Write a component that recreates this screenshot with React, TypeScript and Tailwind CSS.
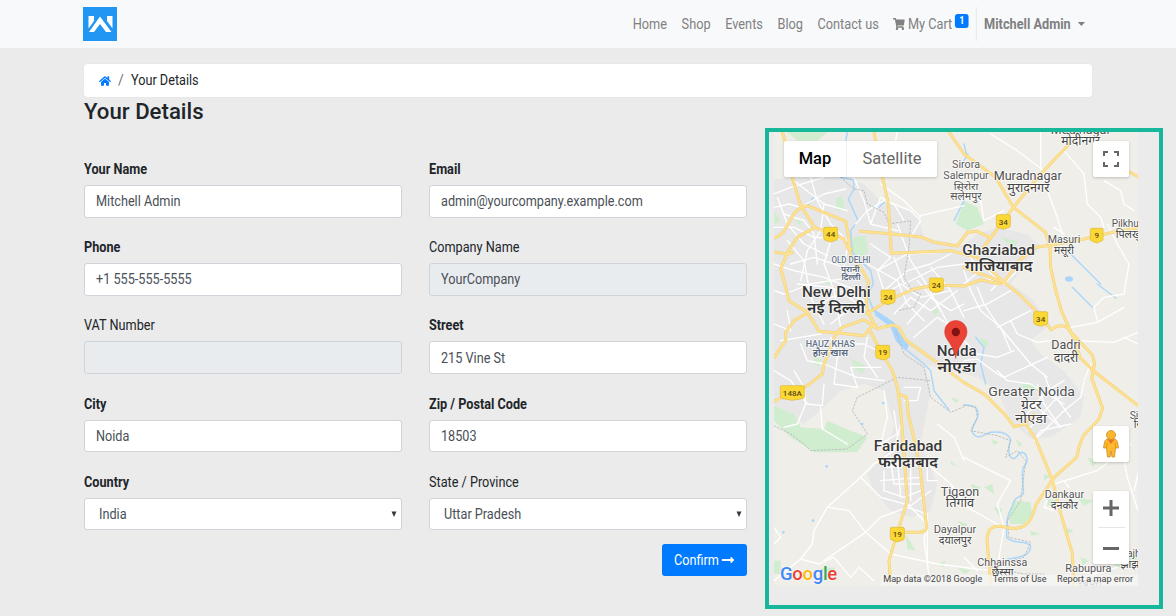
import React from "react";
import { FaHome, FaShoppingCart, FaLongArrowAltRight } from "react-icons/fa";

const NAV = ["Home", "Shop", "Events", "Blog", "Contact us"];

type FieldDef = { label: string; value: string; required?: boolean; kind?: "select" | "disabled" };

const FIELDS: FieldDef[] = [
  { label: "Your Name", value: "Mitchell Admin", required: true },
  { label: "Email", value: "admin@yourcompany.example.com", required: true },
  { label: "Phone", value: "+1 555-555-5555", required: true },
  { label: "Company Name", value: "YourCompany", kind: "disabled" },
  { label: "VAT Number", value: "", kind: "disabled" },
  { label: "Street", value: "215 Vine St", required: true },
  { label: "City", value: "Noida", required: true },
  { label: "Zip / Postal Code", value: "18503", required: true },
  { label: "Country", value: "India", required: true, kind: "select" },
  { label: "State / Province", value: "Uttar Pradesh", kind: "select" },
];

function Field({ label, value, required, kind }: FieldDef) {
  const bg = kind === "disabled" ? "bg-[#e9ecef]" : "bg-white";
  const pad = kind === "select" ? "pl-[14px] pr-1" : "px-[11px]";
  return (
    <div className="h-[78.2px]">
      <div className={`h-[21px] origin-left scale-x-[0.905] leading-[21px] text-[#212529] ${required ? "font-bold" : ""}`}>{label}</div>
      <div className={`mt-[5px] flex h-[32.5px] items-center justify-between rounded-[3px] border border-[#ced4da] text-[#495057] ${bg} ${pad}`}>
        <span className="origin-left scale-x-[0.905] pt-px">{value}</span>
        {kind === "select" && (
          <svg width="6" height="7" viewBox="0 0 6 7"><path d="M0.500 0.500H5.500L3 6Z" fill="#343a40" /></svg>
        )}
      </div>
    </div>
  );
}

const URBAN = [
  "M30 165L225 158L300 180L350 230L460 270L480 340L600 365L640 330L700 310L790 330L830 370L790 410L740 480L800 520L860 600L800 650L830 690L900 740L960 820L950 880L860 940L800 945L740 890L700 800L640 760L560 740L480 720L500 800L470 960L520 1080L500 1160L440 1180L380 1160L330 1100L310 1050L370 980L390 900L360 800L300 780L230 800L180 850L120 900L30 850Z",
];

const GREENS = [
  "M70 24L190 24L160 50L100 50Z", "M30 262L50 290L30 300Z", "M90 290L115 285L110 305Z", "M215 225L235 215L240 255L220 262Z",
  "M268 340L305 335L312 385L290 400L262 380Z", "M180 470L205 462L200 482L185 480Z", "M150 700L175 705L165 728L150 720Z",
  "M262 705L305 725L295 750L268 730Z", "M30 845L90 870L110 910L180 915L190 890L260 920L310 940L280 985L150 985L80 940L30 890Z",
  "M500 560L525 556L515 575Z", "M560 820L585 828L575 838Z", "M600 230L640 250L660 300L610 320L575 300Z", "M710 340L760 350L750 378Z",
  "M650 640L675 655L665 670L650 658Z", "M780 775L820 785L840 800L800 800L770 790Z", "M750 1130L800 1135L805 1170L780 1200L740 1200L730 1170Z",
  "M425 1230L455 1280L430 1275Z", "M680 945L705 955L690 962Z", "M755 945L775 960L765 970Z", "M560 1010L580 1030L560 1020Z",
  "M620 1080L650 1090L630 1110Z", "M660 1090L685 1080L690 1110Z", "M850 1125L885 1130L870 1150L845 1140Z", "M940 1120L990 1130L960 1145Z",
  "M900 1210L930 1220L910 1230Z", "M970 1000L1000 1010L985 1030Z", "M30 1310L50 1310L50 1350L30 1350Z", "M160 1335L215 1330L205 1350Z",
  "M580 1190L610 1200L600 1215Z", "M1040 1310L1120 1290L1120 1320L1060 1330Z", "M520 1320L545 1310L540 1330Z", "M800 1220L830 1230L800 1235Z",
  "M840 1050L860 1055L840 1070Z", "M950 1300L975 1310L955 1325Z", "M690 1150L715 1155L705 1175Z", "M580 1330L620 1340L600 1350Z",
];

const MINOR = [
  "M30 210L80 190L180 160", "M30 250L75 240L110 250L180 210L245 195", "M90 170L180 240L250 260", "M140 160L160 230L200 300L250 350",
  "M40 220L70 300L120 360L190 395", "M30 310L90 310L150 340L240 345", "M60 270L120 290L150 330L160 420", "M180 240L170 320L130 380L110 470",
  "M30 420L90 440L180 460L280 500", "M70 350L120 410L140 520L180 600", "M200 350L180 420L210 500L230 610", "M100 480L200 490L300 530",
  "M80 420L150 400L240 430L250 370", "M30 500L60 510L140 480L260 460", "M150 560L200 520L240 510L310 560", "M200 600L250 560L300 540",
  "M265 150L300 230L320 300L400 320", "M275 300L310 260L360 230L440 260L470 290L440 340", "M320 300L350 220L390 240L420 290", "M350 180L420 230L470 280",
  "M470 275L600 245", "M400 24L380 120", "M520 90L500 110", "M400 300L440 410L480 470L530 560", "M320 360L380 400L340 440L360 500",
  "M340 440L430 390L530 385", "M360 500L430 440L500 420L560 390", "M310 420L400 470L430 540L480 590", "M390 400L420 480L520 430L600 420",
  "M350 520L410 480L470 520L560 500", "M390 570L440 520L500 560L580 500", "M430 600L500 520L560 560L600 540", "M450 640L520 580L580 620",
  "M460 470L520 540L580 650", "M500 430L560 500L600 580", "M600 440L620 500L650 560L710 610L740 680", "M600 560L670 540L740 500",
  "M640 490L660 540L700 600L750 660L800 720L850 760", "M600 650L640 690L700 700L750 680", "M700 610L760 580L800 560", "M600 710L640 705L700 750L720 760L850 700",
  "M740 590L760 630L820 655L860 650", "M700 740L730 770L800 780L900 840", "M680 500L700 480L650 450L620 400", "M600 480L660 430L720 480L760 440",
  "M840 750L860 800L920 880", "M820 780L840 840L890 910", "M780 880L850 800L900 770", "M790 920L870 830L930 800", "M820 940L900 860L950 820",
  "M770 830L820 850L890 910", "M960 770L980 720M950 820L960 775", "M920 610L1000 595L1080 550", "M1000 590L990 550L1020 520L1080 510L1095 420L1060 360L1030 300",
  "M900 80L960 150L970 240L1010 280L1020 310", "M830 24L830 130L850 200L880 280L895 330", "M680 30L760 80L840 140", "M1020 170L1070 200L1080 240L1110 260",
  "M930 650L1050 655L1122 625", "M1080 640L1122 660", "M600 220L650 230L660 290L720 260", "M900 330L870 310",
  "M50 650L110 640L170 630", "M200 640L220 700L210 780L280 790L260 730L350 730", "M180 720L280 760L360 770", "M310 640L300 700L340 760", "M230 660L300 660L360 690",
  "M110 660L130 710L180 720", "M30 600L80 620L70 560", "M90 740L120 790L125 840L100 900L60 910", "M30 740L80 770L130 840L175 845L180 780",
  "M170 850L175 915L250 960", "M420 790L470 790L460 830L420 830", "M360 800L370 880L350 960L400 930L390 860", "M330 1020L370 1000L430 1010",
  "M360 1040L360 1100L420 1120L470 1100", "M380 1010L390 1080L470 1080", "M400 1000L410 1120M440 1020L440 1130M350 1070L470 1060",
  "M370 1030L490 1020L490 1070L520 1070", "M430 1140L490 1200", "M290 1060L330 1020L390 980L410 900", "M290 1060L190 1150L150 1220L145 1260L110 1305L30 1370",
  "M290 1060L350 1120L440 1145L500 1100", "M195 1150L255 1160L305 1225L380 1290L520 1320L680 1340L740 1380", "M305 1225L350 1180L430 1150",
  "M180 1310L305 1225", "M110 1305L165 1320L210 1300L260 1360L285 1330L330 1370", "M430 1150L490 1170L480 1250L500 1386", "M490 1170L490 1320",
  "M490 1020L560 1080L610 1150L710 1206", "M600 1000L740 1070L700 1140L720 1210L705 1300L740 1386", "M520 900L570 940L600 1010",
  "M870 1080L1000 1040L1100 960", "M1070 950L1090 1060L1122 1160", "M900 1070L915 1090", "M850 1130L840 1150L870 1160", "M600 1300L640 1340", "M30 1210L50 1240L30 1260",
  "M810 950L830 920L920 900", "M1122 1050L1110 1100", "M940 1340L990 1350L1060 1330",
];

const HIGHWAYS = [
  "M55 24L65 60L85 160L110 245L152 310L185 322M152 310L100 340L72 382L50 435L60 470L75 530L130 565L165 622L215 626L300 635L320 610L335 603",
  "M30 342C80 330 70 255 130 245L245 292L255 345L255 375L262 395L295 440L315 475L305 510L310 560L330 600",
  "M30 384L70 390L85 386", "M190 325L240 345L252 374L262 374",
  "M330 24L345 110L373 240L382 388L560 380L640 400L720 475",
  "M290 322L385 330L475 340L510 355L580 366L610 325L640 322L680 342",
  "M555 24L600 90L695 160L748 250L845 325L858 370L860 430L875 500L892 560L920 623L985 693L992 720L983 763L1016 853L1005 885L958 935L945 970L938 1000L870 1060L815 1143C800 1210 770 1220 725 1210C690 1200 665 1210 670 1260L675 1320L682 1388",
  "M925 50L830 150L748 250L680 342L650 380", "M1080 135L1122 158",
  "M1122 312L1060 322L960 345L860 364L815 370L770 405L720 475L765 510L810 555L862 617Q890 596 912 612L935 650L948 700L985 738L1122 845",
  "M308 570L370 530L450 495L515 483L600 486L650 468L710 480",
  "M130 567L90 590L65 625L65 650L30 700", "M30 832L50 822L130 785L175 750L180 720L215 630L235 610L300 587L340 614L385 603L405 610L425 648L520 716L600 776L660 810L720 868L750 908L785 900L815 945L865 1068L890 1168L925 1288L930 1388",
  "M315 615L350 680L385 740L400 790L410 860L418 960L430 1130L405 1210L375 1310L380 1386",
  "M410 812L428 820L433 870L450 945L468 1030L488 1210Q485 1225 465 1225L410 1225",
  "M600 430L650 450L720 475", "M785 895L810 870",
];

const WATER = [
  "M250 24L240 80L230 160L268 168L270 195L253 225L282 290L260 320L265 385L320 440L328 480L310 510L325 552",
  "M400 640L430 680L480 720L500 740L510 800L555 858", "M600 843Q640 840 642 868C645 890 615 910 628 930C645 950 660 930 680 925C720 920 735 930 740 948C725 990 745 1025 765 988C785 975 800 1010 778 1030C770 1060 780 1080 778 1110C765 1120 748 1120 745 1150C725 1175 728 1210 728 1240C755 1265 780 1245 800 1265C800 1290 780 1300 730 1305",
  "M600 60L610 100M600 110L612 90M150 220L130 245M600 230L570 290", "M925 490L985 550M1000 480L1055 522", "M900 370L950 420L1010 480M635 640L660 670L650 720L665 780", "M345 250L365 230",
];

const DASHES = [
  "M245 130L230 160L270 195L300 200L310 240L360 265L375 300L440 290L435 370L420 460L445 500L470 510L450 550L400 560",
  "M30 905L80 930L120 960L140 980L250 975L310 930L265 860L280 820L400 760L500 770", "M395 620L420 690L480 730L500 820L560 865L600 848",
  "M600 843L635 850L640 880L620 920L700 935L740 950L725 1000L760 980L785 1010L770 1130L730 1190L735 1240L800 1255L780 1300L680 1330L780 1350L840 1350",
];

type Label = [number, number, string, number, string?, number?, number?];
const LABELS: Label[] = [
  [950, 30, "Modinagar", 36, "#555", 400, 180], [950, 63, "मोदीनगर", 36, "#444", 400, 116],
  [606, 132, "Sirora", 30, "#5c5c5c", 400, 84], [606, 164, "Salempur", 30, "#5c5c5c", 400, 136],
  [606, 198, "सिरोरा", 30, "#555", 400, 74], [606, 229, "सलेमपुर", 31, "#555", 400, 94],
  [791, 167, "Muradnagar", 38, "#505050", 400, 204], [793, 205, "मुरादनगर", 38, "#444", 400, 126],
  [1103, 308, "Pilkhuwa", 32, "#555", 400, 120], [1106, 341, "पिलखुवा", 33, "#444", 400, 102],
  [900, 357, "Masuri", 32, "#555", 400, 98], [900, 389, "मसूरी", 33, "#444", 400, 60],
  [704, 393, "Ghaziabad", 44, "#383838", 500, 218], [704, 440, "गाजियाबाद", 44, "#333", 600, 204],
  [261, 418, "OLD DELHI", 25, "#64748b", 500, 117], [259, 443, "पुरानी", 25, "#56657b", 600, 56], [261, 469, "दिल्ली", 25, "#56657b", 600, 57],
  [217, 519, "New Delhi", 44, "#383838", 500, 206], [216, 567, "नई दिल्ली", 44, "#333", 600, 174],
  [199, 668, "HAUZ KHAS", 27, "#64748b", 500, 148], [199, 695, "हौज़ खास", 26, "#56657b", 600, 106],
  [578, 696, "Noida", 43, "#383838", 500, 120], [578, 744, "नोएडा", 44, "#333", 600, 116],
  [906, 676, "Dadri", 38, "#505050", 400, 88], [906, 713, "दादरी", 37, "#444", 400, 74],
  [803, 815, "Greater Noida", 39, "#505050", 400, 260], [802, 854, "ग्रेटर", 38, "#444", 400, 62], [801, 897, "नोएडा", 38, "#444", 400, 94],
  [1118, 885, "Sik", 31, "#555"], [1124, 913, "सि", 32, "#444"],
  [432, 981, "Faridabad", 44, "#383838", 500, 206], [432, 1030, "फरीदाबाद", 44, "#333", 600, 180],
  [588, 1115, "Tigaon", 38, "#505050", 400, 115], [588, 1150, "तिगांव", 36, "#444", 400, 85],
  [901, 1122, "Dankaur", 32, "#555", 400, 118], [901, 1155, "दनकौर", 32, "#444", 400, 82],
  [573, 1226, "Dayalpur", 32, "#555", 400, 128], [573, 1259, "दयालपुर", 33, "#444", 400, 98],
  [715, 1326, "Chhainssa", 32, "#555", 400, 150], [716, 1355, "छैंस्सा", 31, "#444", 400, 66],
  [973, 1344, "Rabupura", 32, "#555", 400, 138], [978, 1390, "रबूपुरा", 32, "#777", 400],
  [1106, 1299, "Jhajhar", 31, "#555", 400], [1104, 1331, "झाझर", 32, "#444", 400],
];

const SHIELDS: [number, number, string][] = [
  [200, 331, "44"], [718, 293, "34"], [998, 334, "9"], [372, 519, "24"], [517, 483, "24"], [830, 584, "34"],
  [356, 685, "19"], [85, 806, "148A"], [400, 1231, "19"],
];

function MapDrawing() {
  return (
    <svg className="block h-[454px] w-[364px]" viewBox="30 24 1092 1362" fill="none" strokeLinejoin="round" strokeLinecap="round">
      <rect x="30" y="24" width="1092" height="1362" fill="#f0eee9" />
      {URBAN.map((d) => <path key={d} d={d} fill="#e7e7e7" />)}
      {GREENS.map((d) => <path key={d} d={d} fill="#d1edd0" />)}
      <path d="M310 510L330 555L390 595L405 625L435 665L425 680L395 650L380 610L335 575Z" fill="#a8d5fb" />
      <ellipse cx="915" cy="465" rx="12" ry="8" fill="#a8d5fb" />
      {[[188, 1027], [147, 1190], [58, 1225], [295, 900], [358, 837]].map(([x, y]) => <circle key={x} cx={x} cy={y} r="4" fill="#a8d5fb" />)}
      {WATER.map((d) => <path key={d} d={d} stroke="#acd7fa" strokeWidth="4.5" />)}
      {MINOR.map((d) => <path key={d} d={d} stroke="#ffffff" strokeWidth="4" />)}
      {DASHES.map((d) => <path key={d} d={d} stroke="#b3b6b9" strokeWidth="2.5" strokeDasharray="5 6" />)}
      {HIGHWAYS.map((d) => <path key={d} d={d} stroke="#f3cf72" strokeWidth="9" />)}
      {HIGHWAYS.map((d) => <path key={d} d={d} stroke="#fde293" strokeWidth="6" />)}
      {SHIELDS.map(([x, y, t]) => {
        const w = t.length > 2 ? 72 : t.length > 1 ? 42 : 38;
        return (
          <g key={`${x}-${y}`}>
            <path d={`M${x - w / 2} ${y - 17}Q${x - w / 2} ${y - 21} ${x - w / 2 + 4} ${y - 21}H${x + w / 2 - 4}Q${x + w / 2} ${y - 21} ${x + w / 2} ${y - 17}V${y + 12}Q${x + w / 2} ${y + 17} ${x + w / 2 - 6} ${y + 18}L${x} ${y + 23}L${x - w / 2 + 6} ${y + 18}Q${x - w / 2} ${y + 17} ${x - w / 2} ${y + 12}Z`} fill="#fdd835" stroke="#d9b53a" strokeWidth="2" />
            <text x={x} y={y + 9} fontSize="24" fontWeight="500" fill="#594a17" textAnchor="middle">{t}</text>
          </g>
        );
      })}
      {LABELS.map(([x, y, t, size, fill, weight, len]) => (
        <text key={`${x}-${y}`} x={x} y={y} fontSize={size} fontWeight={weight ?? 400} fill={fill} stroke="#ffffffcc" strokeWidth="5" paintOrder="stroke" textAnchor="middle" textLength={len} lengthAdjust="spacingAndGlyphs">{t}</text>
      ))}
      <path d="M575 702C571 680 564 668 554 653C547 643 542 635 542 623A33.500 33.500 0 0 1 609 623C609 635 604 643 597 653C587 668 579 680 575 702Z" fill="#ea4335" stroke="#d23529" strokeWidth="1.500" />
      <circle cx="575.500" cy="624" r="12.500" fill="#811411" />
      <rect x="350" y="1352" width="772" height="34" fill="#f5f5f5" fillOpacity="0.75" />
    </svg>
  );
}

function MapPanel() {
  return (
    <div className="relative h-[454px] w-[364px] overflow-hidden">
      <MapDrawing />
      <div className="absolute left-[10px] top-[9px] flex h-9 rounded-[2px] bg-white text-[16.5px] leading-9 shadow-[0_1px_3px_rgba(0,0,0,0.2)]">
        <div className="w-[63px] border-r border-[#f0f0f0] text-center font-medium text-black">Map</div>
        <div className="w-[90px] text-center text-[#666]">Satellite</div>
      </div>
      <div className="absolute left-[319px] top-[9px] flex h-9 w-9 items-center justify-center rounded-[2px] bg-white shadow-[0_1px_3px_rgba(0,0,0,0.2)]">
        <svg width="18" height="18" viewBox="0 0 18 18" fill="#666"><path d="M1 1H6V3H3V6H1ZM12 1H17V6H15V3H12ZM1 12H3V15H6V17H1ZM15 12H17V17H12V15H15Z" /></svg>
      </div>
      <div className="absolute left-[319px] top-[294px] flex h-9 w-9 items-center justify-center rounded-[2px] bg-white shadow-[0_1px_3px_rgba(0,0,0,0.2)]">
        <svg width="18" height="28" viewBox="0 0 18 28">
          <path d="M5 9H13Q15 10 15.500 12L16.500 18H13.500L12.500 27H10L9 21L8 27H5.500L4.500 18H1.500L2.500 12Q3 10 5 9Z" fill="#fdb92b" stroke="#cb8c2d" strokeWidth="0.800" />
          <path d="M5.500 9.500H12.500L9 14Z" fill="#e9732b" />
          <path d="M5 12.500L4.500 18M13 12.500L13.500 18" stroke="#dc8b20" strokeWidth="0.800" />
          <circle cx="9" cy="5" r="4.500" fill="#fbb72b" stroke="#cb8c2d" strokeWidth="0.800" />
        </svg>
      </div>
      <div className="absolute left-[319px] top-[359px] flex h-[73px] w-9 flex-col items-center rounded-[2px] bg-white shadow-[0_1px_3px_rgba(0,0,0,0.2)]">
        <div className="flex h-[37px] w-[27px] items-center justify-center border-b border-[#e6e6e6] pb-[3px]">
          <svg width="16" height="16" viewBox="0 0 16 16"><path d="M6.500 0H9.500V6.500H16V9.500H9.500V16H6.500V9.500H0V6.500H6.500Z" fill="#666" /></svg>
        </div>
        <div className="mt-[19px] h-[3px] w-4 bg-[#666]" />
      </div>
      <div className="absolute left-[6px] top-[431px] text-[18.500px] font-medium leading-[22px] tracking-[-0.3px] [text-shadow:0_0_2px_white]">
        <span className="text-[#4285f4]">G</span><span className="text-[#ea4335]">o</span><span className="text-[#fbbc05]">o</span><span className="text-[#4285f4]">g</span><span className="text-[#34a853]">l</span><span className="text-[#ea4335]">e</span>
      </div>
      <div className="absolute bottom-0 right-[5px] flex h-[13px] gap-[10.5px] whitespace-nowrap text-[9.1px] leading-[13px] text-[#444]">
        <span>Map data ©2018 Google</span><span>Terms of Use</span><span>Report a map error</span>
      </div>
    </div>
  );
}

export default function App() {
  return (
    <div className="h-[616px] w-[1176px] overflow-hidden bg-[#ebebeb] font-['Roboto','Noto_Sans',sans-serif] text-[14px] text-[#212529]">
      <header className="flex h-12 items-center bg-[#f8f9fa] pl-[83px] pr-[91px]">
        <svg width="34" height="34" viewBox="0 0 34 34">
          <rect width="34" height="34" fill="#2196f3" />
          <path d="M5.500 9H11V14L5.500 21.500ZM24 9H29.500V21.500L24 14ZM6 25L17 9.500L28.500 25H23L17 17L11 25Z" fill="#fff" />
        </svg>
        <div className="ml-auto flex origin-right scale-x-[0.91] items-center text-[#7f8081]">
          <nav className="flex items-center gap-[16px]">
            {NAV.map((n) => <span key={n}>{n}</span>)}
            <span className="flex items-center">
              <FaShoppingCart className="mr-[3px] h-3 w-[13px]" preserveAspectRatio="none" />My Cart
              <span className="mb-[7px] ml-[3px] flex h-[14px] w-[15px] items-center justify-center rounded-[3px] bg-[#007bff] text-[10px] font-bold text-white">1</span>
            </span>
          </nav>
          <div className="ml-[8px] flex h-[34px] items-center border-l border-[#e4e5e6] pl-[8px] font-bold">
            Mitchell Admin
            <svg className="ml-[8px]" width="8" height="4" viewBox="0 0 8 4"><path d="M0 0H8L4 4Z" fill="#7f8081" /></svg>
          </div>
        </div>
      </header>
      <div className="flex pl-[84px] pt-4">
        <div className="flex h-[33px] w-[1008px] items-center rounded-[3px] bg-white pl-[15px] shadow-[0_0_1px_rgba(0,0,0,0.15)]">
          <FaHome className="h-3 w-3 text-[#007bff]" />
          <span className="ml-[7px] mr-[7px] text-[#6c757d]">/</span>
          <span className="origin-left scale-x-[0.905]">Your Details</span>
        </div>
      </div>
      <main className="flex pl-[84px]">
        <section className="w-[663px]">
          <h1 className="mt-px h-[26px] text-[22.2px] font-medium leading-[26px]">Your Details</h1>
          <div className="mt-[35px] grid grid-cols-[318px_318px] gap-x-[27px]">
            {FIELDS.map((f) => <Field key={f.label} {...f} />)}
          </div>
          <div className="-mt-[5.5px] flex justify-end">
            <button className="flex h-8 w-[85px] items-center rounded-[3px] bg-[#007bff] pl-3 text-white">
              <span className="w-[46px] origin-left scale-x-[0.905]">Confirm</span>
              <FaLongArrowAltRight className="ml-[1px] h-[14px] w-[14px]" />
            </button>
          </div>
        </section>
        <aside className="ml-[18px] mt-[31px] h-[481px] w-[398px] border-4 border-[#17b79b] pl-[5px]">
          <MapPanel />
        </aside>
      </main>
    </div>
  );
}
